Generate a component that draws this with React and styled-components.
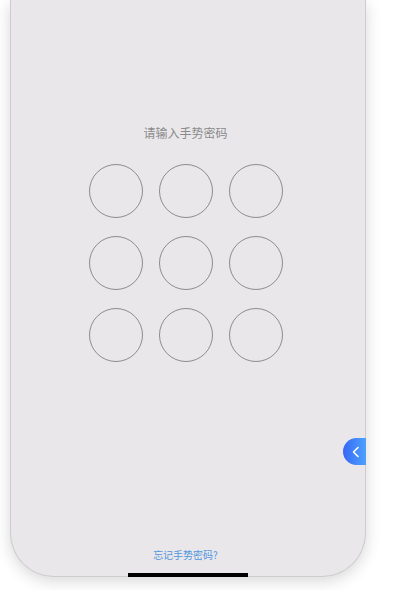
import React from 'react'
import styled, { createGlobalStyle } from 'styled-components'

const GlobalStyle = createGlobalStyle`
  html, body {
    margin: 0;
    padding: 0;
    background: #ffffff;
    font-family: "Noto Sans CJK SC", "Noto Sans", sans-serif;
  }
`

const Page = styled.div`
  width: 406px;
  height: 590px;
  overflow: hidden;
  padding-left: 10px;
  box-sizing: border-box;
  background: #fff;
`

/* 手机外框 */
const Phone = styled.div`
  position: relative;
  width: 356px;
  height: 577px;
  box-sizing: border-box;
  background: #e9e7ea;
  border: 1px solid #cdcdcd;
  border-top: none;
  border-radius: 0 0 44px 44px;
  box-shadow: 0 4px 16px rgba(0, 0, 0, 0.16);
  display: flex;
  flex-direction: column;
  align-items: center;
  padding: 125px 5px 14px 0;
`

const Title = styled.div`
  font-size: 12px;
  line-height: 16px;
  color: #8a8a8a;
`

const Grid = styled.div`
  margin-top: 23px;
  display: grid;
  grid-template-columns: repeat(3, 54px);
  grid-auto-rows: 54px;
  column-gap: 16px;
  row-gap: 18px;
`

const Dot = styled.div`
  border: 1px solid #8c8b8d;
  border-radius: 50%;
  box-sizing: border-box;
`

const Spacer = styled.div`
  flex: 1;
`

const Forgot = styled.a`
  font-size: 10px;
  line-height: 14px;
  color: #5196de;
  text-decoration: none;
  cursor: pointer;
`

const HomeBar = styled.div`
  position: absolute;
  left: 117px;
  bottom: -1px;
  width: 120px;
  height: 4px;
  background: #000;
`

/* 侧边悬浮按钮 */
const SideTab = styled.div`
  position: absolute;
  right: -1px;
  top: 438px;
  width: 23px;
  height: 27px;
  border-radius: 14px 0 0 14px;
  background: linear-gradient(90deg, #3767f4, #4ea2ff);
  display: flex;
  align-items: center;
  justify-content: center;
  padding-left: 2px;
  box-sizing: border-box;
`

const App = () => {
  const dots = Array.from({ length: 9 })

  return (
    <>
      <GlobalStyle />
      <Page>
        <Phone>
          <Title>请输入手势密码</Title>
          <Grid>
            {dots.map((_, i) => (
              <Dot key={i} />
            ))}
          </Grid>
          <Spacer />
          <Forgot>忘记手势密码?</Forgot>
          <SideTab>
            <svg width="10" height="12" viewBox="0 0 10 12">
              <path d="M7 1.5 L2.5 6 L7 10.5" fill="none" stroke="#fff" strokeWidth="1.6" strokeLinecap="round" strokeLinejoin="round" />
            </svg>
          </SideTab>
          <HomeBar />
        </Phone>
      </Page>
    </>
  )
}

export default App
